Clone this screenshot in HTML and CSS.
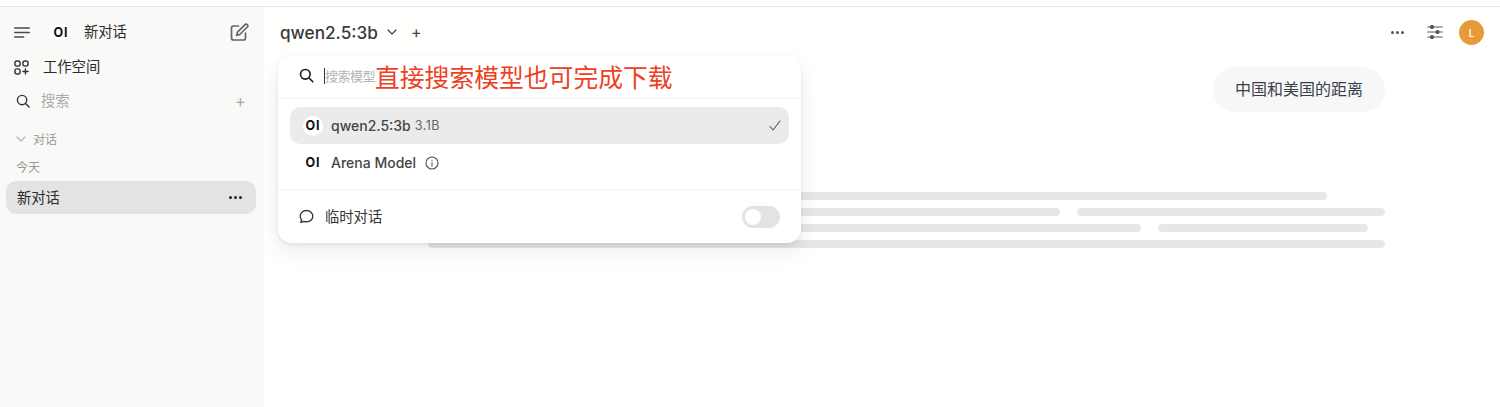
FILE: index.html
```html
<!DOCTYPE html>
<html>
<head>
  <meta name="viewport" content="width=device-width, initial-scale=1.0">
  <title>新对话</title>
  <link rel="stylesheet" href="styles.css">
</head>
<body>
  <div class="app">
    <!-- 左侧边栏 -->
    <aside class="sidebar">
      <div class="side-top">
        <svg class="icon-menu" width="16" height="11" viewBox="0 0 16 11" fill="none" stroke="#4b4b4b" stroke-width="1.300" stroke-linecap="round"><path d="M.7 1h14.600M.7 5.500h14.600M.7 10h9"/></svg>
        <span class="logo">OI</span>
        <span class="side-title">新对话</span>
        <svg class="icon-edit" width="19" height="19" viewBox="0 0 19 19" fill="none" stroke="#666" stroke-width="1.700" stroke-linecap="round" stroke-linejoin="round"><path d="M8.500 3H3.500A2 2 0 0 0 1.500 5v10a2 2 0 0 0 2 2h10a2 2 0 0 0 2-2v-5"/><path d="M15 1.700a1.600 1.600 0 0 1 2.300 2.300L9.800 11.500l-3.200.9.900-3.200z"/></svg>
      </div>
      <div class="side-row workspace">
        <svg width="15" height="15" viewBox="0 0 16 16" fill="none" stroke="#333" stroke-width="1.500" stroke-linecap="round"><rect x="1" y="1" width="5.500" height="5.500" rx="2.200"/><rect x="9.500" y="1" width="5.500" height="5.500" rx="2.200"/><rect x="1" y="9.500" width="5.500" height="5.500" rx="2.200"/><path d="M12.200 9.500v5.500M9.500 12.200h5.500"/></svg>
        <span class="row-text">工作空间</span>
      </div>
      <div class="side-row search">
        <svg width="14" height="14" viewBox="0 0 15 15" fill="none" stroke="#333" stroke-width="1.500" stroke-linecap="round"><circle cx="6.500" cy="6.500" r="5"/><path d="M10.200 10.200L14 14"/></svg>
        <span class="search-text row-text">搜索</span>
        <span class="side-plus">+</span>
      </div>
      <div class="group-head">
        <svg width="10" height="6" viewBox="0 0 10 6" fill="none" stroke="#b5b5b5" stroke-width="1.100" stroke-linecap="round" stroke-linejoin="round"><path d="M1 1l4 4 4-4"/></svg>
        <span>对话</span>
      </div>
      <div class="group-date">今天</div>
      <div class="chat-item">
        <span class="row-text">新对话</span>
        <span class="dots"><i></i><i></i><i></i></span>
      </div>
    </aside>

    <main class="main">
      <header class="topbar">
        <span class="model-name">qwen2.5:3b</span>
        <svg class="model-caret" width="10" height="6" viewBox="0 0 10 6" fill="none" stroke="#444" stroke-width="1.200" stroke-linecap="round" stroke-linejoin="round"><path d="M1 1l4 4 4-4"/></svg>
        <span class="model-plus">+</span>
        <div class="top-right">
          <span class="more"><i></i><i></i><i></i></span>
          <svg width="16" height="14" viewBox="0 0 16 14" fill="#555" stroke="#555" stroke-width="1.200" stroke-linecap="round"><path d="M.8 2h14.400M.8 7h14.400M.8 12h14.400"/><circle cx="5" cy="2" r="1.500"/><circle cx="10.500" cy="7" r="1.500"/><circle cx="5" cy="12" r="1.500"/></svg>
          <span class="avatar">L</span>
        </div>
      </header>

      <div class="content">
        <div class="user-msg">中国和美国的距离</div>
        <div class="skeleton">
          <div class="sk-row sk-row-1"><span class="sk-a"></span></div>
          <div class="sk-row sk-row-2"><span class="sk-b"></span><span class="sk-c"></span></div>
          <div class="sk-row sk-row-3"><span class="sk-d"></span><span class="sk-e"></span></div>
          <div class="sk-row sk-row-4"><span class="sk-f"></span></div>
        </div>
      </div>

      <!-- 模型选择下拉 -->
      <div class="dropdown">
        <div class="dd-search">
          <svg width="15" height="15" viewBox="0 0 15 15" fill="none" stroke="#1a1a1a" stroke-width="1.600" stroke-linecap="round"><circle cx="6.300" cy="6.300" r="4.800"/><path d="M10 10l3.800 3.800"/></svg>
          <span class="caret"></span>
          <span class="dd-placeholder">搜索模型</span>
          <span class="note">直接搜索模型也可完成下载</span>
        </div>
        <div class="dd-list">
          <div class="dd-item active">
            <span class="logo small">OI</span>
            <span class="dd-name">qwen2.5:3b</span>
            <span class="dd-size">3.1B</span>
            <svg class="dd-check" width="12" height="11" viewBox="0 0 12 11" fill="none" stroke="#55556a" stroke-width="1.100" stroke-linecap="round" stroke-linejoin="round"><path d="M1 6.500L4 10 11 1"/></svg>
          </div>
          <div class="dd-item">
            <span class="logo small">OI</span>
            <span class="dd-name">Arena Model</span>
            <svg class="dd-info" width="14" height="14" viewBox="0 0 14 14" fill="none" stroke="#555" stroke-width="1.100" stroke-linecap="round"><circle cx="7" cy="7" r="6"/><path d="M7 6.500v3.500M7 4.200v.2"/></svg>
          </div>
        </div>
        <div class="dd-temp">
          <svg width="15" height="15" viewBox="0 0 15 15" fill="none" stroke="#333" stroke-width="1.300" stroke-linejoin="round"><path d="M7.500 1.500c3.500 0 6.300 2.500 6.300 5.700s-2.800 5.700-6.300 5.700c-.9 0-1.800-.2-2.600-.5L1.800 13.500l.8-2.700C1.700 9.800 1.200 8.600 1.200 7.200c0-3.200 2.800-5.700 6.300-5.700z"/></svg>
          <span class="row-text">临时对话</span>
          <span class="switch"><i></i></span>
        </div>
      </div>
    </main>
  </div>
</body>
</html>
```

FILE: styles.css
```css
* {
  box-sizing: border-box;
}

html, body {
  height: 100%;
}

body {
  margin: 0;
  padding-top: 6px;
  background-color: #fff;
  font-family: Inter, "Noto Sans CJK SC", sans-serif;
  color: #2b2b2b;
  overflow: hidden;
}

.app {
  display: flex;
  height: 401px;
  border-top: 1px solid #e6e6ea;
}

/* 左侧边栏 */
.sidebar {
  width: 264px;
  flex-shrink: 0;
  background-color: #f9f9f8;
  padding: 0 8px 0 6px;
}

.side-top {
  display: flex;
  align-items: center;
  height: 50px;
  padding-left: 8px;
}

.logo {
  display: flex;
  align-items: center;
  justify-content: center;
  width: 18px;
  height: 18px;
  margin-left: 22px;
  border-radius: 50%;
  background-color: #fff;
  color: #111;
  font-size: 12.500px;
  font-weight: 700;
  letter-spacing: 1px;
}

.side-title {
  margin-left: 14px;
  padding-bottom: 3px;
  font-size: 14.300px;
}

.icon-edit {
  margin-left: auto;
  margin-right: 7px;
}

.side-row {
  display: flex;
  align-items: center;
  font-size: 14.300px;
}

.row-text {
  padding-bottom: 3px;
}

.workspace {
  height: 20px;
  padding-left: 8px;
  gap: 14px;
}

.search {
  height: 20px;
  margin-top: 14px;
  padding-left: 10px;
  gap: 11px;
}

.search-text {
  color: #aaa;
}

.side-plus {
  margin-left: auto;
  margin-right: 10px;
  font-size: 17px;
  color: #aaa;
}

.group-head {
  display: flex;
  align-items: center;
  gap: 7px;
  margin-top: 19px;
  padding-left: 10px;
  font-size: 12px;
  color: #999;
}

.group-date {
  margin-top: 11px;
  padding-left: 10px;
  font-size: 12px;
  color: #999;
}

.chat-item {
  display: flex;
  align-items: center;
  justify-content: space-between;
  height: 33px;
  margin-top: 6px;
  padding: 0 14px 0 11px;
  border-radius: 10px;
  background-color: #e3e3e3;
  font-size: 14.300px;
}

.dots {
  display: flex;
  gap: 2px;
}

.dots i {
  width: 3px;
  height: 3px;
  border-radius: 50%;
  background-color: #222;
}

/* 主区域 */
.main {
  position: relative;
  flex: 1;
  min-width: 0;
  background-color: #fffffe;
}

.topbar {
  display: flex;
  align-items: center;
  height: 50px;
  padding: 0 16px 0 16px;
}

.model-name {
  font-size: 17.200px;
  font-weight: 500;
  color: #3a3a3a;
}

.model-caret {
  margin-left: 9px;
}

.model-plus {
  margin-left: 14px;
  font-size: 16px;
  color: #444;
}

.top-right {
  display: flex;
  align-items: center;
  margin-left: auto;
}

.more {
  display: flex;
  gap: 2px;
  margin-right: 23px;
}

.more i {
  width: 3px;
  height: 3px;
  border-radius: 50%;
  background-color: #555;
}

.avatar {
  display: flex;
  align-items: center;
  justify-content: center;
  width: 25px;
  height: 25px;
  margin-left: 16px;
  margin-top: 1px;
  border-radius: 50%;
  background-color: #e69b38;
  color: #fff;
  font-size: 10px;
  font-weight: 500;
}

.content {
  padding-right: 115px;
}

.user-msg {
  width: 172px;
  height: 45px;
  margin: 10px 0 0 auto;
  border-radius: 23px;
  background-color: #f7f7f8;
  color: #3a3f4d;
  font-size: 16px;
  line-height: 45px;
  text-align: center;
}

.skeleton {
  margin: 79.500px 0 0 164px;
}

.sk-row {
  display: flex;
  gap: 17px;
  height: 8px;
  margin-bottom: 8.300px;
}

.sk-row span {
  height: 8px;
  border-radius: 4px;
  background-color: #e7e7e7;
}

.sk-a {
  width: 899px;
}

.sk-b {
  width: 632px;
}

.sk-c {
  width: 308px;
}

.sk-d {
  width: 713px;
}

.sk-e {
  width: 210px;
}

.sk-f {
  width: 957px;
}

/* 下拉 */
.dropdown {
  position: absolute;
  top: 49px;
  left: 14px;
  width: 523px;
  height: 187px;
  border-radius: 14px;
  background-color: #fff;
  box-shadow: 0 8px 22px rgba(0, 0, 0, 0.08), 0 2px 4px rgba(0, 0, 0, 0.07);
}

.dd-search {
  display: flex;
  align-items: center;
  height: 43px;
  padding: 0 0 3px 21px;
  border-bottom: 1px solid #f5f5f5;
}

.caret {
  width: 1px;
  height: 16px;
  margin-left: 10px;
  background-color: #333;
}

.dd-placeholder {
  width: 50px;
  font-size: 13px;
  letter-spacing: -0.500px;
  color: #b4b4b4;
  white-space: nowrap;
}

.note {
  color: #ee3f24;
  font-size: 24.800px;
  white-space: nowrap;
}

.dd-list {
  height: 91px;
  padding: 8px 12px;
  border-bottom: 1px solid #f5f5f5;
}

.dd-item {
  display: flex;
  align-items: center;
  height: 37px;
  padding: 0 8px 0 13px;
  border-radius: 10px;
  font-size: 14px;
  color: #444;
}

.dd-item.active {
  background-color: #ebebeb;
}

.logo.small {
  margin-left: 0;
  width: 20px;
  height: 20px;
}

.dd-name {
  margin-left: 8px;
  font-weight: 500;
}

.dd-size {
  margin-left: 4px;
  font-size: 12.500px;
  letter-spacing: 0.500px;
  color: #666;
}

.dd-check {
  margin-left: auto;
}

.dd-info {
  margin-left: 9px;
}

.dd-temp {
  display: flex;
  align-items: center;
  height: 53px;
  padding: 0 21px;
  gap: 11px;
  font-size: 14.300px;
  color: #333;
}

.switch {
  display: flex;
  align-items: center;
  width: 38px;
  height: 22px;
  margin-left: auto;
  padding-left: 3px;
  border-radius: 11px;
  background-color: #e3e3e3;
}

.switch i {
  width: 16px;
  height: 16px;
  border-radius: 50%;
  background-color: #fff;
}
```
